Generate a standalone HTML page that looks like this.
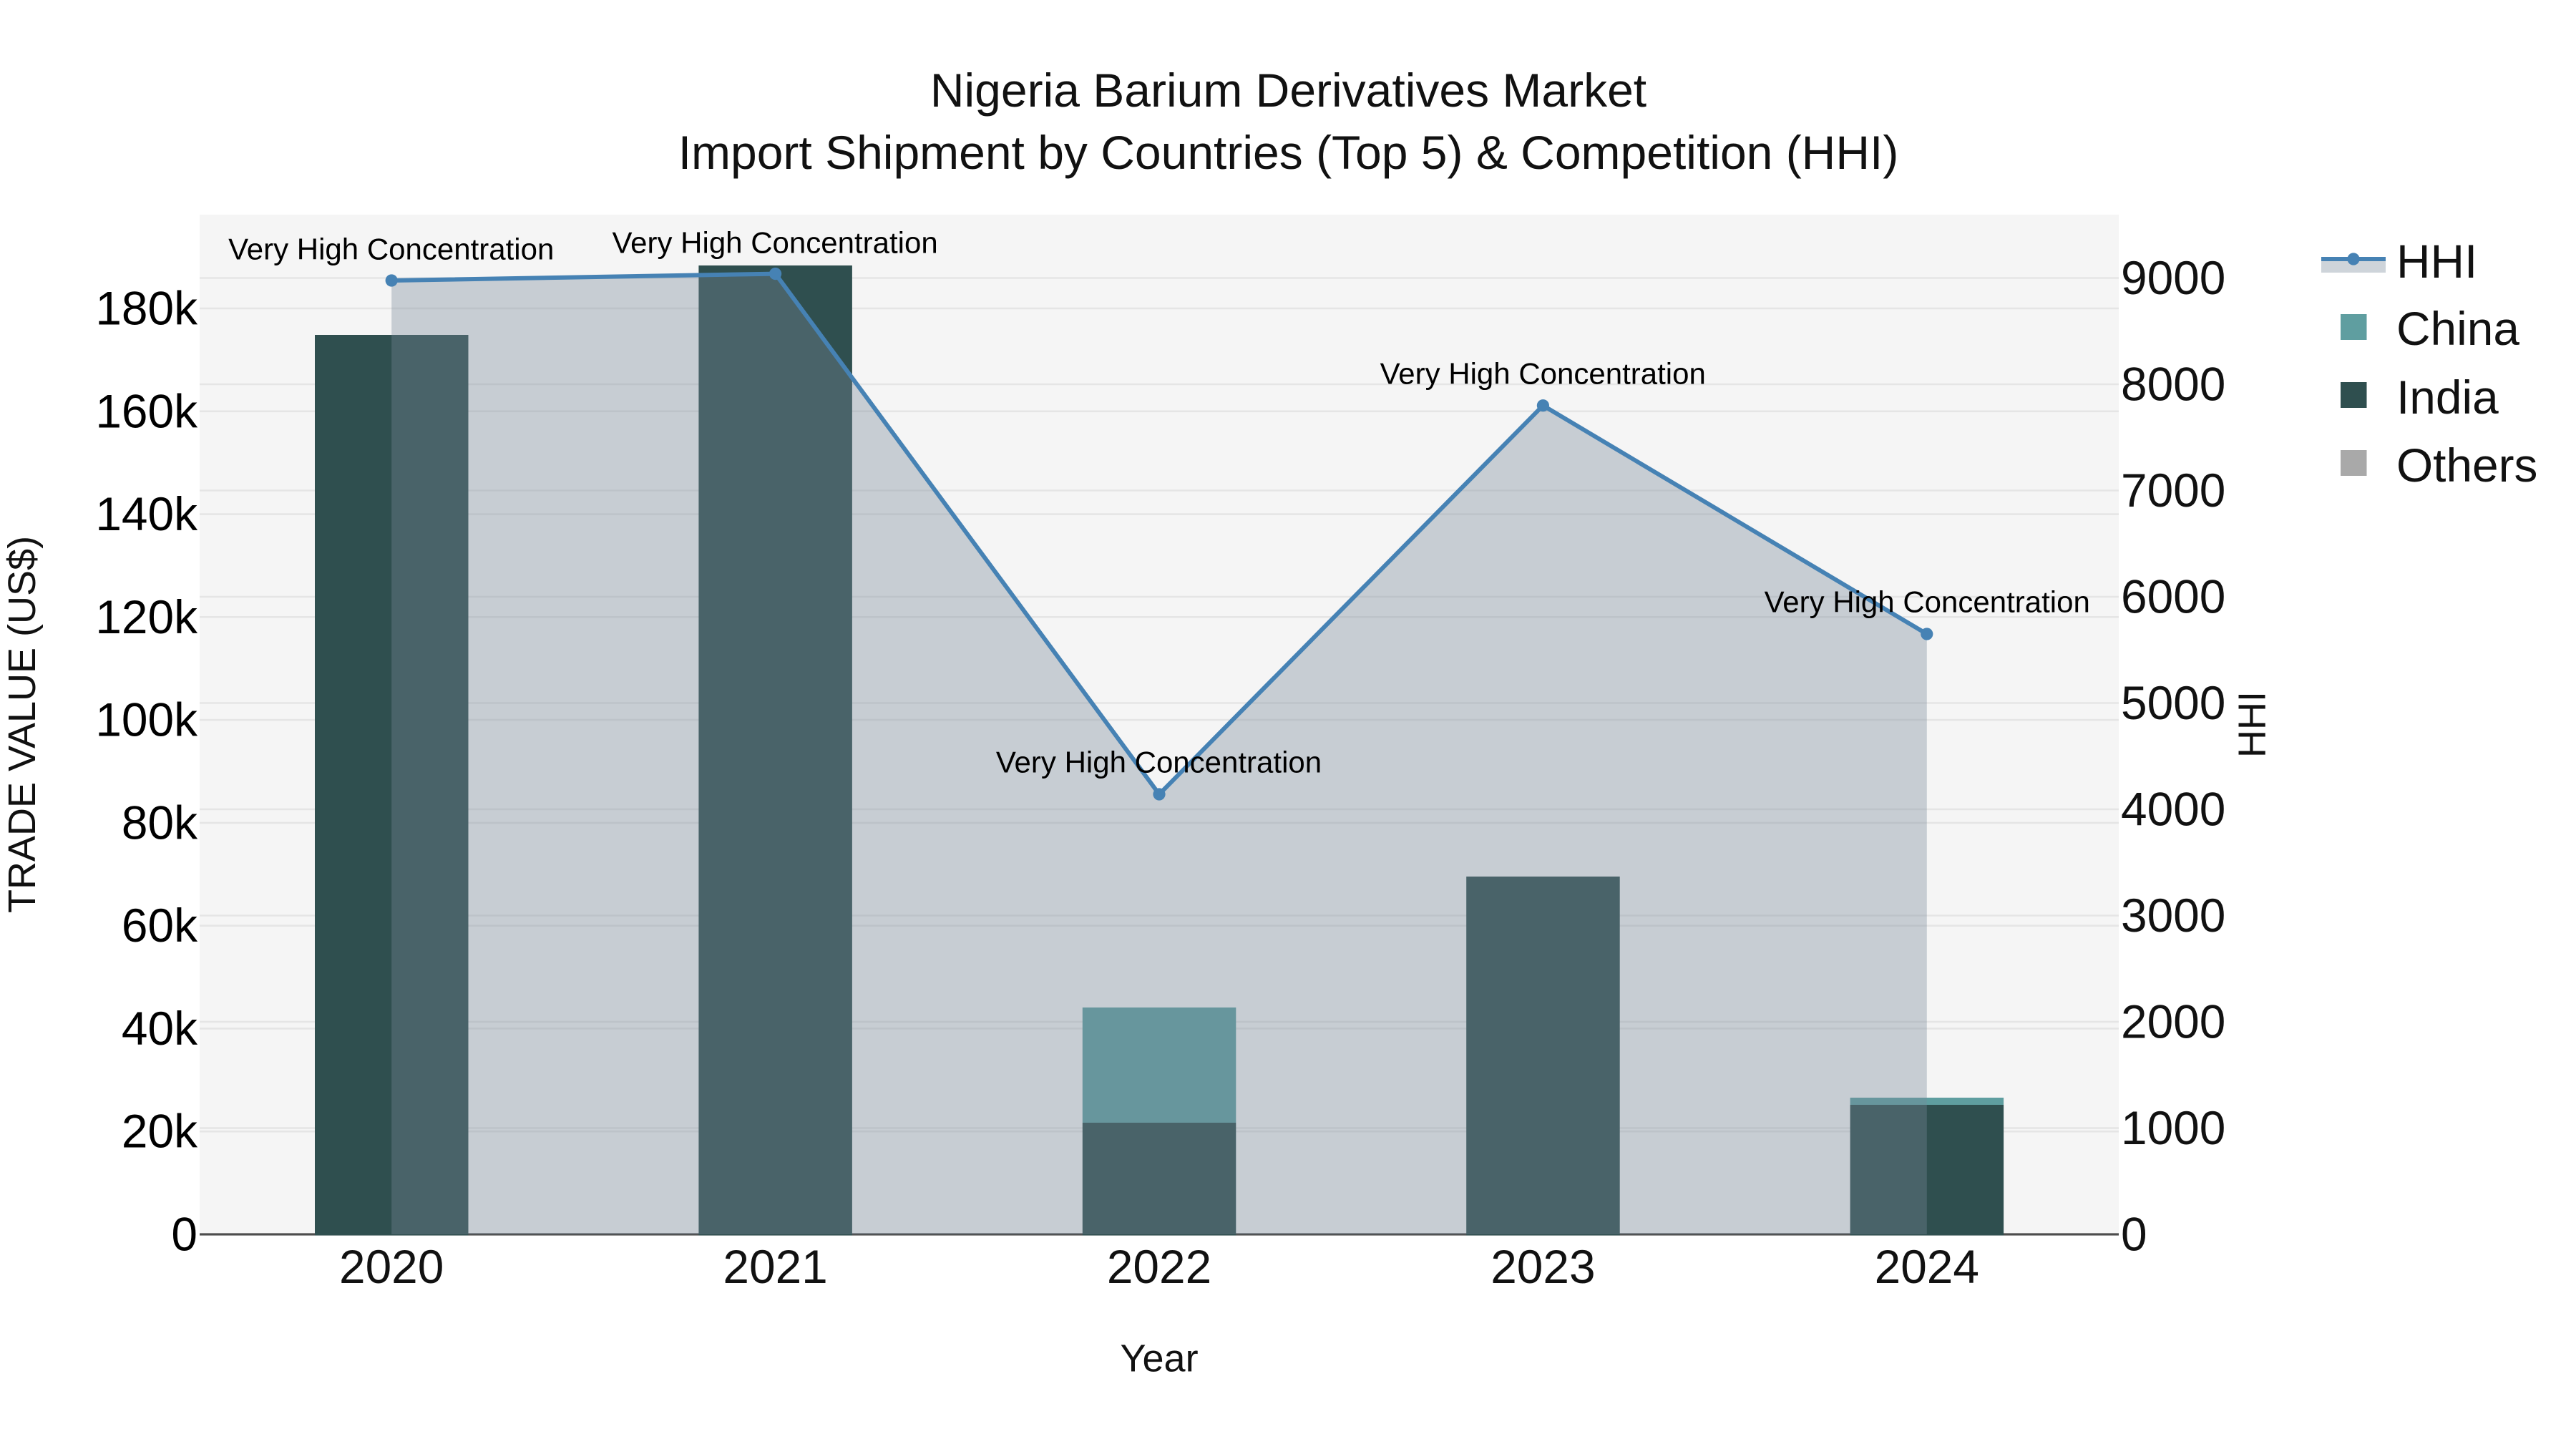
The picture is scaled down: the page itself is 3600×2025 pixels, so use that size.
<!DOCTYPE html>
<html>
<head>
<meta charset="utf-8">
<style>
html,body{margin:0;padding:0;background:#fff;width:3600px;height:2025px;overflow:hidden}
svg{display:block}
text{font-family:"Liberation Sans",sans-serif}
.tl{font-size:65.8px;fill:#000;text-anchor:end}
.tr{font-size:65.8px;fill:#111;text-anchor:start}
.tx{font-size:65.8px;fill:#111;text-anchor:middle}
.lg{font-size:65.8px;fill:#111}
.an{font-size:42px;fill:#000;text-anchor:middle}
.ti{font-size:66px;fill:#111;text-anchor:middle}
.at{font-size:54px;fill:#111;text-anchor:middle}
</style>
</head>
<body>
<svg width="3600" height="2025" viewBox="0 0 3600 2025" xmlns="http://www.w3.org/2000/svg">
<rect x="0" y="0" width="3600" height="2025" fill="#fff"/>
<rect x="279" y="300" width="2682" height="1425" fill="#f5f5f5"/>

<!-- gridlines right axis -->
<g stroke="#e5e5e5" stroke-width="2.6" fill="none">
<path d="M279 1576.5H2961M279 1428H2961M279 1279.5H2961M279 1131H2961M279 982.5H2961M279 834H2961M279 685.5H2961M279 537H2961M279 388.5H2961"/>
<!-- gridlines left axis -->
<path d="M279 1581.2H2961M279 1437.4H2961M279 1293.7H2961M279 1149.9H2961M279 1006.1H2961M279 862.3H2961M279 718.6H2961M279 574.8H2961M279 431H2961"/>
</g>
<!-- axis line -->
<rect x="279" y="1723.4" width="2682" height="3.2" fill="#4d4d4d"/>

<!-- bars -->
<g>
<rect x="440" y="468" width="214.5" height="1258.5" fill="#2f4f4f"/>
<rect x="976.4" y="371" width="214.5" height="1355.5" fill="#2f4f4f"/>
<rect x="1512.8" y="1408" width="214.5" height="161" fill="#5f9ea0"/>
<rect x="1512.8" y="1569" width="214.5" height="157.5" fill="#2f4f4f"/>
<rect x="2049.2" y="1225" width="214.5" height="501.5" fill="#2f4f4f"/>
<rect x="2585.6" y="1534" width="214.5" height="10" fill="#5f9ea0"/>
<rect x="2585.6" y="1544" width="214.5" height="182.5" fill="#2f4f4f"/>
</g>

<!-- HHI area + line -->
<path d="M547.2 392L1083.6 382.6L1620 1110L2156.4 566.7L2692.8 886L2692.8 1725L547.2 1725Z" fill="#778899" fill-opacity="0.36"/>
<path d="M547.2 392L1083.6 382.6L1620 1110L2156.4 566.7L2692.8 886" fill="none" stroke="#4682b4" stroke-width="6" stroke-linejoin="round"/>
<g fill="#4682b4">
<circle cx="547.2" cy="392" r="8.6"/>
<circle cx="1083.6" cy="382.6" r="8.6"/>
<circle cx="1620" cy="1110" r="8.6"/>
<circle cx="2156.4" cy="566.7" r="8.6"/>
<circle cx="2692.8" cy="886" r="8.6"/>
</g>

<!-- annotations -->
<text class="an" x="546.7" y="362.5">Very High Concentration</text>
<text class="an" x="1083.1" y="353.5">Very High Concentration</text>
<text class="an" x="1619.5" y="1079.5">Very High Concentration</text>
<text class="an" x="2156.2" y="536.5">Very High Concentration</text>
<text class="an" x="2693.2" y="855.5">Very High Concentration</text>

<!-- title -->
<text class="ti" x="1800.5" y="149">Nigeria Barium Derivatives Market</text>
<text class="ti" x="1800.5" y="236">Import Shipment by Countries (Top 5) &amp; Competition (HHI)</text>

<!-- left ticks -->
<text class="tl" x="276" y="1747.5">0</text>
<text class="tl" x="276" y="1603.5">20k</text>
<text class="tl" x="276" y="1459.9">40k</text>
<text class="tl" x="276" y="1316.2">60k</text>
<text class="tl" x="276" y="1172.4">80k</text>
<text class="tl" x="276" y="1028.6">100k</text>
<text class="tl" x="276" y="884.8">120k</text>
<text class="tl" x="276" y="741.1">140k</text>
<text class="tl" x="276" y="597.3">160k</text>
<text class="tl" x="276" y="453.5">180k</text>

<!-- right ticks -->
<text class="tr" x="2964" y="1747.5">0</text>
<text class="tr" x="2964" y="1599">1000</text>
<text class="tr" x="2964" y="1450.5">2000</text>
<text class="tr" x="2964" y="1302">3000</text>
<text class="tr" x="2964" y="1153.5">4000</text>
<text class="tr" x="2964" y="1005">5000</text>
<text class="tr" x="2964" y="856.5">6000</text>
<text class="tr" x="2964" y="708">7000</text>
<text class="tr" x="2964" y="559.5">8000</text>
<text class="tr" x="2964" y="411">9000</text>

<!-- x ticks -->
<text class="tx" x="547.2" y="1793">2020</text>
<text class="tx" x="1083.6" y="1793">2021</text>
<text class="tx" x="1620" y="1793">2022</text>
<text class="tx" x="2156.4" y="1793">2023</text>
<text class="tx" x="2692.8" y="1793">2024</text>

<!-- axis titles -->
<text class="at" x="1620" y="1916.5">Year</text>
<text class="at" transform="translate(49 1012.5) rotate(-90)">TRADE VALUE (US$)</text>
<text class="at" transform="translate(3165.5 1012.5) rotate(-90)">HHI</text>

<!-- legend -->
<rect x="3244" y="362" width="90" height="19" fill="#778899" fill-opacity="0.36"/>
<rect x="3244" y="359" width="90" height="6" fill="#4682b4"/>
<circle cx="3289" cy="362" r="8.6" fill="#4682b4"/>
<rect x="3271" y="439" width="36.5" height="36" fill="#5f9ea0"/>
<rect x="3271" y="534" width="36.5" height="36" fill="#2f4f4f"/>
<rect x="3271" y="629" width="36.5" height="36" fill="#a9a9a9"/>
<text class="lg" x="3349" y="388">HHI</text>
<text class="lg" x="3349" y="482">China</text>
<text class="lg" x="3349" y="578">India</text>
<text class="lg" x="3349" y="673">Others</text>
</svg>
</body>
</html>
